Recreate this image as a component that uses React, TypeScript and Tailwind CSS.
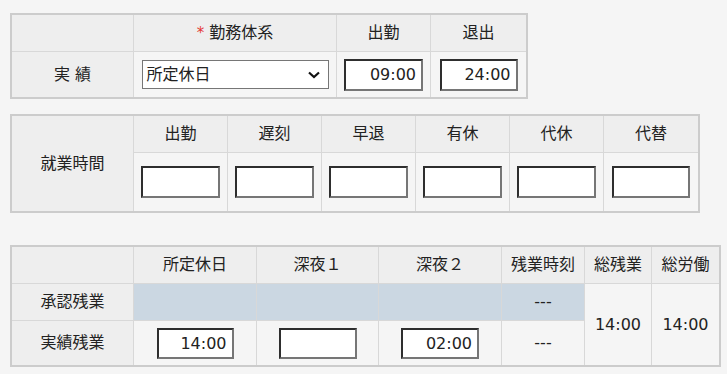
import React from "react";

const FONT = '"DejaVu Sans", "Noto Sans CJK JP", sans-serif';

function TimeInput({ value = "", w = "w-[79px]", h = "h-[32px]" }: { value?: string; w?: string; h?: string }) {
  return (
    <input
      type="text"
      readOnly
      value={value}
      style={{ fontFamily: FONT }}
      className={`${w} ${h} bg-white border-2 border-t-[#2e2e2e] border-l-[#2e2e2e] border-r-[#767676] border-b-[#767676] text-right pr-[5px] text-[16px] text-[#222] outline-none`}
    />
  );
}

const head = "bg-[#eeeeee] flex items-center justify-center text-[16px] text-[#222]";
const cell = "bg-[#f5f5f5] flex items-center justify-center text-[16px] text-[#222]";

export default function App() {
  return (
    <div
      className="min-h-[374px] bg-[#f5f5f5] pl-[10px] pt-[13px] flex flex-col items-start"
      style={{ fontFamily: FONT }}
    >
      {/* Table 1 */}
      <div className="border-2 border-[#cccccc] bg-[#d8d8d8] grid grid-cols-[121px_202px_93px_95px] grid-rows-[36px_45px] gap-px">
        <div className={head}></div>
        <div className={head}>
          <span className="text-[#e53935] mr-[5px] text-[15px]">*</span>勤務体系
        </div>
        <div className={head}>出勤</div>
        <div className={head}>退出</div>
        <div className={head}>実 績</div>
        <div className={cell}>
          <div className="w-[187px] h-[29px] bg-white border border-[#767676] flex items-center justify-between pl-[4px] pr-[8px]">
            <span>所定休日</span>
            <svg width="12" height="8" viewBox="0 0 12 8">
              <polyline points="1,1.5 6,6 11,1.5" fill="none" stroke="#111" strokeWidth="2.2" />
            </svg>
          </div>
        </div>
        <div className={cell}>
          <TimeInput value="09:00" />
        </div>
        <div className={cell}>
          <TimeInput value="24:00" w="w-[78px]" />
        </div>
      </div>

      {/* Table 2 */}
      <div className="mt-[15px] border-2 border-[#cccccc] bg-[#d8d8d8] grid grid-cols-[121px_93px_93px_93px_93px_93px_94px] grid-rows-[36px_58px] gap-px">
        <div className={`${head} row-span-2`}>就業時間</div>
        <div className={head}>出勤</div>
        <div className={head}>遅刻</div>
        <div className={head}>早退</div>
        <div className={head}>有休</div>
        <div className={head}>代休</div>
        <div className={head}>代替</div>
        <div className={cell}><TimeInput /></div>
        <div className={cell}><TimeInput /></div>
        <div className={cell}><TimeInput /></div>
        <div className={cell}><TimeInput /></div>
        <div className={cell}><TimeInput /></div>
        <div className={cell}><TimeInput w="w-[78px]" /></div>
      </div>

      {/* Table 3 */}
      <div className="mt-[32px] border-2 border-[#cccccc] bg-[#d8d8d8] grid grid-cols-[121px_122px_121px_122px_82px_66px_67px] grid-rows-[36px_36px_44px] gap-px">
        <div className={head}></div>
        <div className={head}>所定休日</div>
        <div className={head}>深夜１</div>
        <div className={head}>深夜２</div>
        <div className={head}>残業時刻</div>
        <div className={head}>総残業</div>
        <div className={head}>総労働</div>

        <div className={head}>承認残業</div>
        <div className="bg-[#cbd7e2]"></div>
        <div className="bg-[#cbd7e2]"></div>
        <div className="bg-[#cbd7e2]"></div>
        <div className="bg-[#cbd7e2] flex items-center justify-center text-[16px] text-[#222]">---</div>
        <div className={`${cell} row-span-2`}>14:00</div>
        <div className={`${cell} row-span-2`}>14:00</div>

        <div className={head}>実績残業</div>
        <div className={cell}><TimeInput value="14:00" w="w-[77px]" h="h-[31px]" /></div>
        <div className={cell}><TimeInput w="w-[78px]" h="h-[31px]" /></div>
        <div className={cell}><TimeInput value="02:00" w="w-[78px]" h="h-[31px]" /></div>
        <div className={cell}>---</div>
      </div>
    </div>
  );
}
